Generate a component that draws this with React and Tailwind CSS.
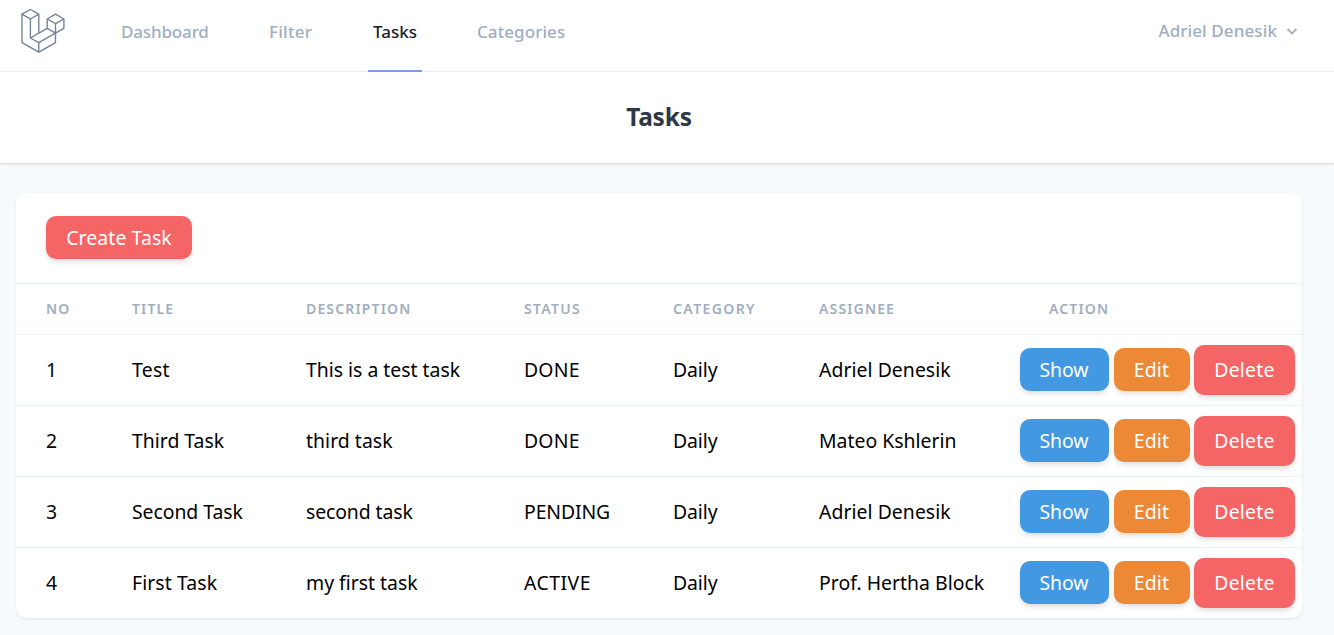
import React from "react";

const tasks = [
  { no: 1, title: ["Test", "tracking-[0.3px]"], description: ["This is a test task", "tracking-[0px]"], status: ["DONE", "tracking-[0.2px]"], assignee: ["Adriel Denesik", "tracking-[0.05px]"] },
  { no: 2, title: ["Third Task", "tracking-[0px]"], description: ["third task", "tracking-[0.05px]"], status: ["DONE", "tracking-[0.2px]"], assignee: ["Mateo Kshlerin", "tracking-[0px]"] },
  { no: 3, title: ["Second Task", "tracking-[-0.05px]"], description: ["second task", "tracking-[-0.1px]"], status: ["PENDING", "tracking-[-0.1px]"], assignee: ["Adriel Denesik", "tracking-[0.05px]"] },
  { no: 4, title: ["First Task", "tracking-[0.1px]"], description: ["my first task", "tracking-[0px]"], status: ["ACTIVE", "tracking-[0.5px]"], assignee: ["Prof. Hertha Block", "tracking-[0.02px]"] },
];

const columns = "grid grid-cols-[86px_174px_218px_149px_146px_201px_1fr] pl-[30px]";

function Logo() {
  return (
    <svg className="ml-5 mt-2 h-[46px] w-[46px] shrink-0" viewBox="20 8 46 46" fill="none" stroke="#718096" strokeWidth="1.35" strokeLinejoin="round">
      <path d="M22 14.2 30.4 9.5 38.8 14.2 30.4 19Z" />
      <path d="M22 14.2V42.6L38.8 52.2 55.5 42.6V33.1L38.8 42.6V52.2" />
      <path d="M30.4 19V38L38.8 42.6M38.8 14.2V33.1M30.4 38 47.2 28.4" />
      <path d="M55.5 14.2 63.9 19 55.5 23.7 47.2 19Z" />
      <path d="M47.2 19V28.4L55.5 33.1 63.9 28.4V19M55.5 23.7V33.1" />
    </svg>
  );
}

function Actions() {
  const base = "flex shrink-0 items-center justify-center rounded-[10px] text-[19.4px] text-white shadow-[0_4px_6px_-1px_rgba(0,0,0,0.1),0_2px_4px_-1px_rgba(0,0,0,0.06)]";
  return (
    <div className="flex items-start">
      <a className={`${base} mt-[3px] h-[43px] w-[89px] bg-[#4299e1] pr-px pt-px tracking-[0px]`}>Show</a>
      <a className={`${base} ml-[5px] mt-[3px] h-[43px] w-[76px] bg-[#ed8936] pr-px pt-px tracking-[0.2px]`}>Edit</a>
      <button className={`${base} ml-1 h-[50px] w-[101px] bg-[#f56565] tracking-[0.25px]`}>Delete</button>
    </div>
  );
}

function Cell({ value }) {
  return <div><span className={value[1]}>{value[0]}</span></div>;
}

export default function App() {
  return (
    <div className="h-[635px] w-full overflow-hidden bg-[#f7fafc] font-['Noto_Sans',sans-serif] text-black">
      <nav className="flex h-[72px] border-b border-[#f1f3f5] bg-white text-[17px] font-medium text-[#a0aec0]">
        <Logo />
        <div className="ml-[55px] flex h-[72px] items-stretch whitespace-nowrap leading-[64px]">
          <a className="w-[148px] tracking-[-0.15px]">Dashboard</a>
          <a className="w-[99px] tracking-[0.25px]">Filter</a>
          <a className="w-[54px] border-b-2 border-[#7f9cf5] text-center tracking-[0px] text-[#1a202c]">Tasks</a>
          <a className="ml-[55px] tracking-[0.07px]">Categories</a>
        </div>
        <button className="ml-auto mr-[37px] flex h-[61px] items-center tracking-[0.1px]">
          Adriel Denesik
          <svg className="ml-[10px] mt-px h-[7px] w-[10px]" viewBox="0 0 10 7" fill="none" stroke="#a0aec0" strokeWidth="1.8"><path d="M.6 1 5 5.4 9.4 1" /></svg>
        </button>
      </nav>
      <header className="relative z-0 flex h-[91px] items-center justify-center pr-4 shadow-[0_1px_3px_0_rgba(0,0,0,0.1),0_1px_2px_0_rgba(0,0,0,0.06)] bg-white">
        <h2 className="text-[24.5px] font-bold leading-none tracking-[-0.2px] text-[#2d3748]">Tasks</h2>
      </header>
      <main className="pl-4 pr-[32px] pt-[30px]">
        <div className="h-[425px] overflow-hidden rounded-[10px] bg-white shadow-[0_1px_3px_0_rgba(0,0,0,0.06),0_1px_2px_0_rgba(0,0,0,0.04)]">
          <div className="h-[90px] pl-[30px] pt-[23px]">
            <button className="h-[43px] w-[146px] rounded-[10px] bg-[#f56565] text-[19.4px] tracking-[0.1px] text-white shadow-[0_4px_6px_-1px_rgba(0,0,0,0.1),0_2px_4px_-1px_rgba(0,0,0,0.06)]">Create Task</button>
          </div>
          <div className={`${columns} h-[51px] items-center border-t border-[#edf2f7] pb-[2px] text-[14px] font-semibold tracking-[1.15px] text-[#a0aec0]`}>
            <div>NO</div>
            <div>TITLE</div>
            <div>DESCRIPTION</div>
            <div className="tracking-[1.3px]">STATUS</div>
            <div className="tracking-[1.4px]">CATEGORY</div>
            <div>ASSIGNEE</div>
            <div className="pl-[29px]">ACTION</div>
          </div>
          {tasks.map((task) => (
            <div key={task.no} className={`${columns} h-[71px] items-center border-t border-[#edf2f7] text-[19.4px] whitespace-nowrap`}>
              <div>{task.no}</div>
              <Cell value={task.title} />
              <Cell value={task.description} />
              <Cell value={task.status} />
              <div className="tracking-[-0.1px]">Daily</div>
              <Cell value={task.assignee} />
              <Actions />
            </div>
          ))}
        </div>
      </main>
    </div>
  );
}
